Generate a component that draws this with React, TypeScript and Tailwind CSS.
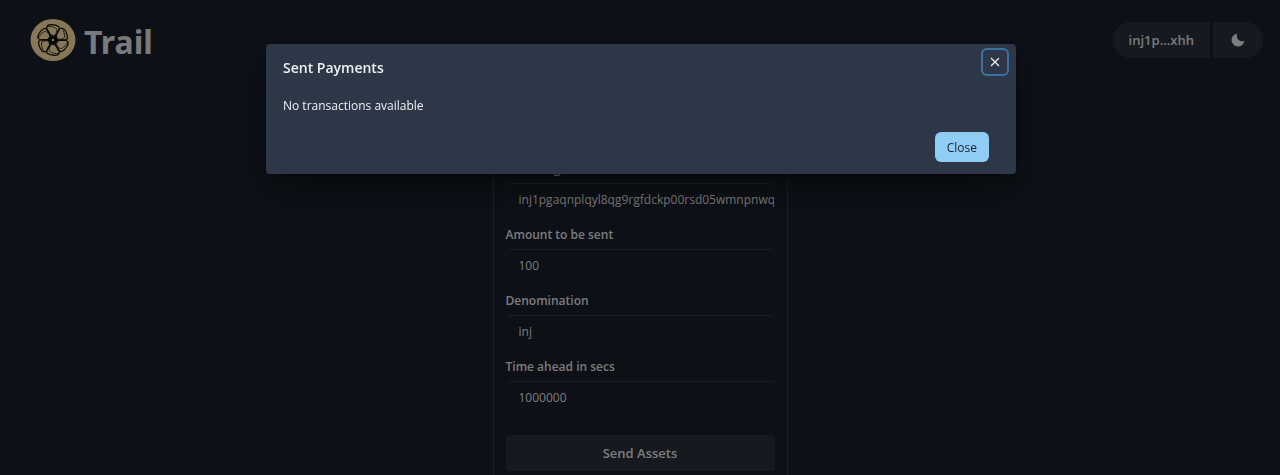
import { useState } from "react";

const fields = [
  { id: "address", label: "Receiving to", value: "inj1pgaqnplqyl8qg9rgfdckp00rsd05wmnpnwq" },
  { id: "amount", label: "Amount to be sent", value: "100" },
  { id: "denomination", label: "Denomination", value: "inj" },
  { id: "time", label: "Time ahead in secs", value: "1000000" },
];

const petals = [0, 60, 120, 180, 240, 300];

function Logo() {
  return (
    <svg viewBox="0 0 46 42" className="h-[42px] w-[46px]" aria-hidden="true">
      <ellipse cx="23" cy="21" rx="22.5" ry="21" fill="#ffe5a8" />
      <g fill="none" stroke="#0c0c0c" strokeLinecap="round" strokeLinejoin="round">
        {petals.map((angle) => (
          <g key={angle} transform={`rotate(${angle + 4} 23 21)`}>
            <path
              d="M22 17.5 C18.5 15 15 10.5 16 8 C17 5.5 23.5 4.9 28 7.4 C29.5 10.5 26.5 15 24.5 17.5"
              strokeWidth="1.2"
            />
            <path d="M16 8 C18 7 24 7.8 26 9.8 C26.5 12 25.5 14.5 24.3 17" strokeWidth="0.7" />
            <path d="M23 19 L22 16.2 M23.2 18.5 L24.2 16.2" strokeWidth="1.3" />
          </g>
        ))}
      </g>
      <circle cx="23" cy="21" r="2.6" fill="none" stroke="#0c0c0c" strokeWidth="2.6" />
    </svg>
  );
}

function Header() {
  return (
    <header className="flex items-center justify-between pt-[19px] pr-[17px] pb-5 pl-[30px]">
      <div className="flex items-center gap-2">
        <Logo />
        <h1 className="pt-1 font-['Noto_Sans',sans-serif] text-[32px] leading-[38px] font-bold">Trail</h1>
      </div>
      <div className="flex gap-[3px] text-[13px] font-semibold">
        <button type="button" className="h-9 rounded-l-full rounded-r-xs bg-white/8 px-4 pt-0.5">
          inj1p...xhh
        </button>
        <button
          type="button"
          aria-label="Toggle color mode"
          className="flex h-9 w-[50px] items-center justify-center rounded-l-xs rounded-r-full bg-white/8"
        >
          <svg viewBox="0 0 24 24" className="size-[14px]" fill="currentColor" aria-hidden="true">
            <path d="M21.4,13.7C20.6,13.9,19.8,14,19,14c-5,0-9-4-9-9c0-0.8,0.1-1.6,0.3-2.4c0.1-0.3,0-0.7-0.3-1 c-0.3-0.3-0.6-0.4-1-0.3C4.3,2.7,1,7.1,1,12c0,6.1,4.9,11,11,11c4.9,0,9.3-3.3,10.6-8.1c0.1-0.3,0-0.7-0.3-1 C22.1,13.7,21.7,13.6,21.4,13.7z" />
          </svg>
        </button>
      </div>
    </header>
  );
}

function SendForm() {
  return (
    <form
      className="mx-auto mt-5 w-[295px] rounded-md border border-white/12 px-3 pt-[57px] pb-6"
      onSubmit={(event) => event.preventDefault()}
    >
      <div className="flex flex-col gap-3">
        {fields.map((field) => (
          <div key={field.id} className="flex flex-col gap-1">
            <label htmlFor={field.id} className="text-xs leading-5 font-semibold">
              {field.label}
            </label>
            <input
              id={field.id}
              defaultValue={field.value}
              className="h-[30px] w-full rounded-md border border-white/3 border-t-white/12 bg-transparent pt-0.5 pr-0 pl-3 text-xs outline-none"
            />
          </div>
        ))}
      </div>
      <button type="submit" className="mt-6 h-9 w-full rounded-sm bg-white/8 pt-0.5 text-[13px] font-semibold">
        Send Assets
      </button>
    </form>
  );
}

function PaymentsDialog({ onClose }: { onClose: () => void }) {
  return (
    <div className="fixed inset-0 flex items-start justify-center bg-black/48 pt-11 pl-0.5">
      <section
        role="dialog"
        aria-modal="true"
        aria-labelledby="payments-title"
        className="relative w-full max-w-[750px] rounded-sm bg-[#2d3748] shadow-[0_0_0_1px_rgba(0,0,0,0.1),0_5px_10px_rgba(0,0,0,0.2),0_15px_40px_rgba(0,0,0,0.4)]"
      >
        <h2 id="payments-title" className="px-[17px] pt-3 pb-2 text-sm leading-6 font-semibold">
          Sent Payments
        </h2>
        <button
          type="button"
          aria-label="Close dialog"
          onClick={onClose}
          className="absolute top-1.5 right-[9px] flex size-6 items-center justify-center rounded-sm shadow-[0_0_0_2px_rgba(66,153,225,0.6)] outline-none"
        >
          <svg viewBox="0 0 10 10" className="size-[10px]" stroke="currentColor" strokeWidth="1.2" aria-hidden="true">
            <path d="M1 1 L9 9 M9 1 L1 9" />
          </svg>
        </button>
        <p className="px-[17px] py-2 text-xs leading-5">No transactions available</p>
        <footer className="flex justify-end px-[27px] pt-2 pb-3">
          <button
            type="button"
            onClick={onClose}
            className="h-[30px] rounded-md bg-[#90cdf4] px-3 pt-0.5 text-xs text-[#1a202c]"
          >
            Close
          </button>
        </footer>
      </section>
    </div>
  );
}

export default function App() {
  const [open, setOpen] = useState(true);
  return (
    <div className="h-screen overflow-hidden bg-[#1a202c] font-['Open_Sans','Noto_Sans',sans-serif] text-white/92">
      <Header />
      <main>
        <SendForm />
      </main>
      {open && <PaymentsDialog onClose={() => setOpen(false)} />}
    </div>
  );
}
